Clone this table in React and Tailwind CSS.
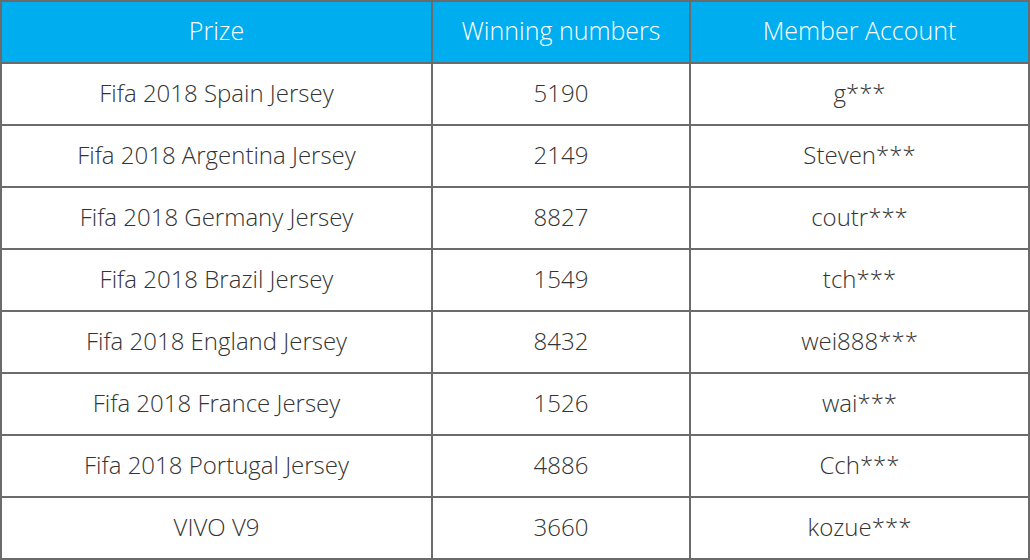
import React from 'react';

const rows = [
  ['Fifa 2018 Spain Jersey', '5190', 'g***'],
  ['Fifa 2018 Argentina Jersey', '2149', 'Steven***'],
  ['Fifa 2018 Germany Jersey', '8827', 'coutr***'],
  ['Fifa 2018 Brazil Jersey', '1549', 'tch***'],
  ['Fifa 2018 England Jersey', '8432', 'wei888***'],
  ['Fifa 2018 France Jersey', '1526', 'wai***'],
  ['Fifa 2018 Portugal Jersey', '4886', 'Cch***'],
  ['VIVO V9', '3660', 'kozue***'],
];

const App = () => {
  return (
    <div className="w-[1030px] h-[560px] bg-white font-['Open_Sans',sans-serif]">
      <div className="grid grid-cols-[429px_256px_1fr] auto-rows-[60px] gap-[2px] p-[2px] bg-[#6b6b6b] w-[1030px]">
        {/* Header */}
        {['Prize', 'Winning numbers', 'Member Account'].map((h) => (
          <div key={h} className="bg-[#00adef] flex items-center justify-center pb-[3px] text-white text-[25px] font-light">
            {h}
          </div>
        ))}

        {rows.map((r) =>
          r.map((cell, i) => (
            <div key={r[0] + i} className="bg-white flex items-center justify-center pb-[2px] text-[#333] text-[24px] font-light">
              {cell}
            </div>
          ))
        )}
      </div>
    </div>
  );
};

export default App;
